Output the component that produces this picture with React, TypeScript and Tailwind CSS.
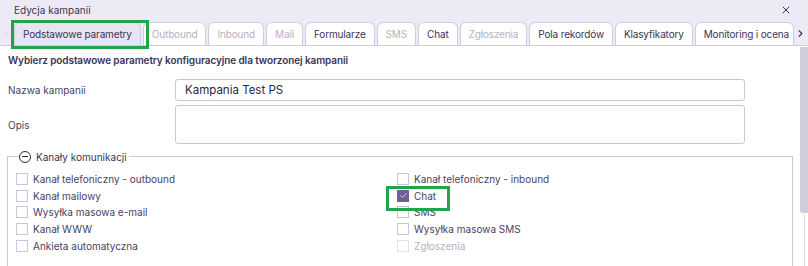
import { X, ChevronLeft, ChevronRight, Check } from 'lucide-react';

type Tab = { label: string; disabled?: boolean; active?: boolean };

const tabs: Tab[] = [
  { label: 'Podstawowe parametry', active: true },
  { label: 'Outbound', disabled: true },
  { label: 'Inbound', disabled: true },
  { label: 'Mail', disabled: true },
  { label: 'Formularze' },
  { label: 'SMS', disabled: true },
  { label: 'Chat' },
  { label: 'Zgłoszenia', disabled: true },
  { label: 'Pola rekordów' },
  { label: 'Klasyfikatory' },
  { label: 'Monitoring i ocena' },
];

type Channel = { label: string; checked?: boolean; disabled?: boolean; highlight?: boolean };

const leftChannels: Channel[] = [
  { label: 'Kanał telefoniczny - outbound' },
  { label: 'Kanał mailowy' },
  { label: 'Wysyłka masowa e-mail' },
  { label: 'Kanał WWW' },
  { label: 'Ankieta automatyczna' },
];

const rightChannels: Channel[] = [
  { label: 'Kanał telefoniczny - inbound' },
  { label: 'Chat', checked: true, highlight: true },
  { label: 'SMS' },
  { label: 'Wysyłka masowa SMS' },
  { label: 'Zgłoszenia', disabled: true },
];

function ChannelRow({ channel }: { channel: Channel }) {
  return (
    <div className="relative flex h-[16.6px] items-center gap-[5px]">
      <span
        className={`flex h-[12px] w-[12px] shrink-0 items-center justify-center border ${
          channel.checked
            ? 'border-[#6f5f92] bg-[#6f5f92]'
            : channel.disabled
              ? 'border-[#e2e0ec] bg-white'
              : 'border-[#c9c6dc] bg-white'
        }`}
      >
        {channel.checked ? <Check className="h-[9px] w-[9px] text-white" strokeWidth={1.75} /> : null}
      </span>
      <span className={channel.disabled ? 'text-[#b5b2c2]' : 'text-[#4a4262]'}>{channel.label}</span>
      {channel.highlight ? (
        <span className="pointer-events-none absolute left-[-11px] top-[-2px] z-10 h-[25px] w-[64px] border-[3px] border-[#22a54a]" />
      ) : null}
    </div>
  );
}

export default function App() {
  return (
    <div
      className="flex h-[266px] w-[808px] flex-col overflow-hidden bg-white text-[10px] leading-[12px] text-[#3c3456]"
      style={{ fontFamily: 'Inter, "Noto Sans", sans-serif' }}
    >
      <div className="flex flex-col bg-[#eceaf5]">
        <div className="flex h-[22px] items-center justify-between pb-[2px] pl-[14px] pr-[16px]">
          <span className="text-[#3c3456]">Edycja kampanii</span>
          <X className="h-[12px] w-[12px] text-[#3c3456]" strokeWidth={2} />
        </div>
        <div className="flex h-[23px] items-end">
          <ChevronLeft className="mb-[5px] ml-[1px] h-[11px] w-[11px] shrink-0 text-[#d4d2e0]" strokeWidth={2} />
          <div className="ml-[2px] flex min-w-0 flex-1 items-end gap-[2px] tracking-[-0.15px]">
            {tabs.map((tab, i) => (
              <div
                key={tab.label}
                className={`relative flex h-[23px] items-center whitespace-nowrap rounded-t-[6px] border border-b-0 border-[#cfcde3] px-[8px] ${
                  tab.active ? 'z-10 bg-[#e7e5f3]' : 'bg-white'
                } ${tab.disabled ? 'text-[#b5b2c2]' : 'text-[#3c3456]'} ${
                  i === tabs.length - 1 ? 'min-w-0 shrink overflow-hidden' : 'shrink-0'
                }`}
              >
                {tab.label}
                {tab.active ? (
                  <span className="pointer-events-none absolute left-[-4px] top-[-3px] h-[29px] w-[138px] border-[3px] border-[#22a54a]" />
                ) : null}
              </div>
            ))}
          </div>
          <ChevronRight className="mb-[6px] ml-[1px] mr-[2px] h-[11px] w-[11px] shrink-0 text-[#3c3456]" strokeWidth={2.5} />
        </div>
      </div>

      <div className="flex min-h-0 flex-1 border-t border-[#cfcde3]">
        <div className="flex min-w-0 flex-1 flex-col">
          <div className="pl-[8px] pt-[8px] font-semibold tracking-[-0.1px] text-[#3c3456]">
            Wybierz podstawowe parametry konfiguracyjne dla tworzonej kampanii
          </div>

          <div className="mt-[13px] grid grid-cols-[167px_570px] gap-y-[4px] pl-[8px]">
            <div className="flex items-center text-[#4a4262]">Nazwa kampanii</div>
            <div className="flex h-[22px] items-center rounded-[3px] border border-[#c9c6dc] px-[9px] text-[11.5px] text-[#2d2640]">
              Kampania Test PS
            </div>
            <div className="flex items-center text-[#4a4262]">Opis</div>
            <div className="h-[39px] rounded-[3px] border border-[#c9c6dc]" />
          </div>

          <fieldset className="mx-[7px] mt-[6px] border border-[#c9c6dc] pb-[12px] pl-[8px]">
            <legend className="ml-[3px] flex h-[13px] items-center gap-[5px] pr-[2px] text-[#3c3456]">
              <span className="flex h-[12px] w-[12px] items-center justify-center rounded-full border-[1.5px] border-[#2d2640]">
                <span className="h-[1.5px] w-[6px] bg-[#2d2640]" />
              </span>
              Kanały komunikacji
            </legend>
            <div className="mt-[8px] grid grid-cols-[381px_1fr]">
              <div className="flex flex-col">
                {leftChannels.map((c) => (
                  <ChannelRow key={c.label} channel={c} />
                ))}
              </div>
              <div className="flex flex-col">
                {rightChannels.map((c) => (
                  <ChannelRow key={c.label} channel={c} />
                ))}
              </div>
            </div>
          </fieldset>
        </div>
        <div className="flex w-[8px] shrink-0 flex-col">
          <div className="mt-[1px] h-[166px] rounded-bl-[2px] bg-[#cfcddb]" />
          <div className="ml-[4px] flex-1 border-l border-[#dcdaf0]" />
        </div>
      </div>
    </div>
  );
}
